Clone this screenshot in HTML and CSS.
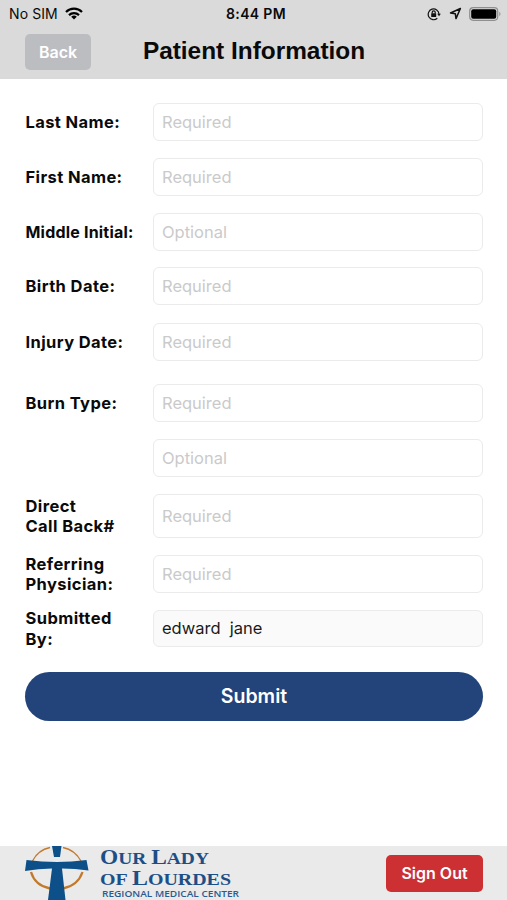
FILE: index.html
```html
<!DOCTYPE html>
<html lang="en">
<head>
    <meta charset="UTF-8">
    <title>Patient Information</title>
    <link rel="stylesheet" href="styles.css">
</head>
<body>
    <header>
        <div class="status-bar">
            <div class="status-left">
                <span>No SIM</span>
                <svg width="18" height="13" viewBox="0 0 18 13" fill="none" stroke="#000" stroke-width="2.2">
                    <path d="M1 5a11.4 11.4 0 0 1 16 0"/>
                    <path d="M4 8.1a7.2 7.2 0 0 1 10 0"/>
                    <path d="M9 12.4 6.2 9.8a4 4 0 0 1 5.6 0z" fill="#000" stroke="none"/>
                </svg>
            </div>
            <span class="status-time">8:44 PM</span>
            <div class="status-right">
                <!-- rotation lock -->
                <svg width="14" height="14" viewBox="0 0 14 14" fill="none" stroke="#111" stroke-width="1.2">
                    <path d="M10.3 11.3A5.4 5.4 0 1 1 12 7"/>
                    <path d="M10.2 6.7h3.7L12 9.2z" fill="#111" stroke="none"/>
                    <path d="M5.2 6.5V5.3a1.5 1.5 0 0 1 3 0v1.2"/>
                    <rect x="4.2" y="6.3" width="5" height="3.7" rx=".5" fill="#111" stroke="none"/>
                </svg>
                <svg class="location" width="13" height="13" viewBox="0 0 13 13" fill="none" stroke="#111" stroke-width="1.5" stroke-linejoin="round">
                    <path d="M11.4 1.5 1.5 6l4.8.7.7 4.9z"/>
                </svg>
                <svg class="battery" width="32" height="14" viewBox="0 0 32 14">
                    <rect x=".7" y=".7" width="28" height="12.6" rx="3.5" fill="none" stroke="#8f8f8f" stroke-width="1.2"/>
                    <rect x="2.2" y="2.2" width="25" height="9.6" rx="2" fill="#000"/>
                    <path d="M30.3 4.8c1.5.6 1.5 3.8 0 4.4z" fill="#8f8f8f"/>
                </svg>
            </div>
        </div>
        <div class="nav-bar">
            <button class="back">Back</button>
            <h1>Patient Information</h1>
        </div>
    </header>

    <form>
        <div class="row">
            <label for="last-name">Last Name:</label>
            <input type="text" id="last-name" placeholder="Required">
        </div>
        <div class="row">
            <label for="first-name">First Name:</label>
            <input type="text" id="first-name" placeholder="Required">
        </div>
        <div class="row">
            <label for="middle-initial" class="small">Middle Initial:</label>
            <input type="text" id="middle-initial" placeholder="Optional">
        </div>
        <div class="row row-birth">
            <label for="birth-date">Birth Date:</label>
            <input type="text" id="birth-date" placeholder="Required">
        </div>
        <div class="row row-injury">
            <label for="injury-date">Injury Date:</label>
            <input type="text" id="injury-date" placeholder="Required">
        </div>
        <div class="row row-burn">
            <label for="burn-type">Burn Type:</label>
            <input type="text" id="burn-type" placeholder="Required">
        </div>
        <div class="row">
            <label for="burn-type-2"></label>
            <input type="text" id="burn-type-2" placeholder="Optional">
        </div>
        <div class="row row-phone">
            <label for="call-back">Direct<br>Call Back#</label>
            <input type="text" id="call-back" placeholder="Required">
        </div>
        <div class="row">
            <label for="physician">Referring<br>Physician:</label>
            <input type="text" id="physician" placeholder="Required">
        </div>
        <div class="row row-submitted">
            <label for="submitted-by">Submitted<br>By:</label>
            <input type="text" id="submitted-by" value="edward  jane" readonly>
        </div>
        <button type="button" class="submit">Submit</button>
    </form>

    <footer>
        <svg class="logo" width="216" height="54" viewBox="0 0 216 54">
            <!-- ring behind the cross -->
            <g fill="none" stroke="#c17a2c">
                <path d="M7.500 15Q13 4 25 1.500" stroke-width="1.300"/>
                <path d="M38 1.500Q50 4 56 15" stroke-width="1.300"/>
                <path d="M6 26Q10 39.500 25 42.500" stroke-width="2.300"/>
                <path d="M57.500 26Q53 39.500 38 42.500" stroke-width="2.300"/>
            </g>
            <g fill="#0d4f88">
                <path d="M27 0h9.500l-1.500 11h-6z"/>
                <path d="M1.500 14Q32 18 61.500 14l2 10.500Q50 22.500 37 22.500L40.500 54H23l4-31.500Q13 22.500 0 25z"/>
            </g>
            <g class="logo-name">
                <text x="75" y="18" textLength="109" lengthAdjust="spacingAndGlyphs"><tspan class="cap">O</tspan>UR <tspan class="cap">L</tspan>ADY</text>
                <text x="75" y="39" textLength="131" lengthAdjust="spacingAndGlyphs">OF <tspan class="cap">L</tspan>OURDES</text>
            </g>
            <text class="logo-sub" x="77" y="51" textLength="137" lengthAdjust="spacingAndGlyphs">REGIONAL MEDICAL CENTER</text>
        </svg>
        <button class="sign-out">Sign Out</button>
    </footer>
</body>
</html>
```
FILE: styles.css
```css
* {
    box-sizing: border-box;
}

body {
    margin: 0;
    height: 900px;
    display: flex;
    flex-direction: column;
    overflow: hidden;
    font-family: Inter, "Liberation Sans", sans-serif;
    background-color: #fff;
    color: #0a0a0a;
}

button {
    border: none;
    padding: 0;
    font-family: inherit;
    font-weight: 600;
    color: white;
}

/* Status bar and title */
header {
    height: 79px;
    background-color: #dadada;
}

.status-bar {
    height: 27px;
    display: grid;
    grid-template-columns: 1fr auto 1fr;
    align-items: center;
    padding: 0 6px 0 9px;
    font-size: 14px;
}

.status-left,
.status-right {
    display: flex;
    align-items: center;
}

.status-left {
    gap: 7px;
    letter-spacing: 0.1px;
}

.status-time {
    padding-left: 2px;
    font-weight: 600;
    letter-spacing: 0.35px;
}

.status-right {
    justify-content: flex-end;
}

.location {
    margin: 0 7px 0 8px;
}

.nav-bar {
    display: grid;
    grid-template-columns: 66px 1fr 66px;
    align-items: center;
    padding: 7px 24px 0 25px;
}

.back {
    height: 36px;
    border-radius: 5px;
    background-color: #bbbdc1;
    font-size: 16px;
}

h1 {
    margin: 0;
    padding-bottom: 2px;
    text-align: center;
    white-space: nowrap;
    font-family: "Liberation Sans", Arial, sans-serif;
    font-size: 24.4px;
    line-height: 30px;
}

/* Form */
form {
    flex: 1;
    padding: 24px 24px 0 25px;
}

.row {
    display: grid;
    grid-template-columns: 128px 1fr;
    grid-template-rows: 100%;
    align-items: center;
    height: 38px;
    margin-bottom: 17px;
}

.row-birth {
    margin-top: -1px;
    margin-bottom: 18px;
}

.row-injury {
    margin-bottom: 23px;
}

.row-phone {
    height: 44px;
}

.row-submitted {
    height: 37px;
    margin-bottom: 24.5px;
}

label {
    padding-left: 0.5px;
    font-size: 16.5px;
    font-weight: 650;
    line-height: 20.5px;
    letter-spacing: 0.4px;
}

label.small {
    font-size: 16px;
    letter-spacing: 0.2px;
}

.row input {
    width: 100%;
    height: 100%;
    padding: 0 8px 1px;
    border: 1px solid #ebebeb;
    border-radius: 6px;
    background-color: #fff;
    font-family: inherit;
    font-size: 16.5px;
    color: #1a1a1a;
}

.row input::placeholder {
    color: #cacaca;
}

.row input[readonly] {
    background-color: #fafafa;
    white-space: pre;
}

.submit {
    display: block;
    width: 100%;
    height: 49px;
    border-radius: 25px;
    background-color: #23437b;
    font-size: 19.5px;
}

/* Footer */
footer {
    display: flex;
    justify-content: space-between;
    height: 54px;
    padding: 0 24px 0 25px;
    background-color: #eaeaea;
}

.logo-name {
    font-family: "Liberation Serif", serif;
    font-weight: bold;
    font-size: 17.5px;
    fill: #1d4f87;
}

.logo-name .cap {
    font-size: 21px;
}

.logo-sub {
    font-family: "Open Sans", sans-serif;
    font-weight: 600;
    font-size: 8.5px;
    fill: #2a5b90;
}

.sign-out {
    width: 97px;
    height: 37px;
    margin-top: 8.5px;
    border-radius: 5px;
    background-color: #cc3033;
    font-size: 16px;
}
```
